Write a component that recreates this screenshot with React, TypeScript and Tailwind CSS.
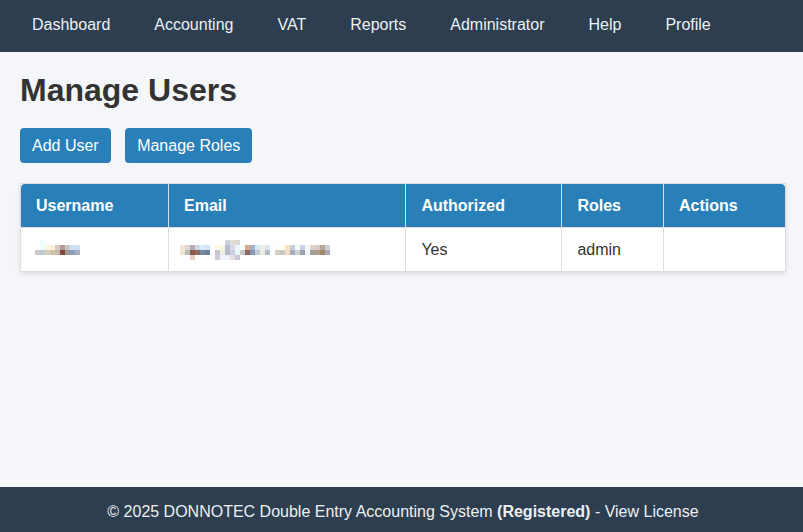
import React from 'react'

const navItems = ['Dashboard', 'Accounting', 'VAT', 'Reports', 'Administrator', 'Help', 'Profile']

// blurred-out values from the table, [x, y, colour] on a 5px grid
type Block = [number, number, string]

const row = (y: number, startX: number, colours: string[]): Block[] =>
  colours.map((c, i) => [startX + i * 5, y, c] as Block).filter((b) => b[2] !== '')

const usernameBlocks: Block[] = [
  ...row(0, 5, ['#f0fdff']),
  ...row(5, 5, ['#eefcff', '#fdf2e0', '#fdf0d8', '#d8c8c4', '#b89a94', '#c8c8c8', '#cfe0f0', '#cfe0f0']),
  ...row(10, 0, ['#c9c9c7', '#b9cdd2', '#d9cfb5', '#d0c4a8', '#c5b9b2', '#85483a', '#98989c', '#8aa0b8', '#a9aec2']),
]

const emailBlocks: Block[] = [
  ...row(0, 45, ['#ccd4dc', '#e0dcd8', '#dcd8d4']),
  ...row(5, 0, ['#f5e2d0', '#d8d8d8', '#b8aab4', '#d0d8e0', '#dceaf8', '#d0e2f5']),
  ...row(5, 35, ['#fbfbe8', '#f8f8e0', '#bcbccc', '#d8d8e8', '#eef8fc', '#f8fff8', '#d8a890', '#a8b0c8', '#d8e8f5', '#f0f0e8', '#d8e8f8']),
  ...row(5, 95, ['#fdfdf5', '#fdfdf0', '#f8e0c8', '#c8ccdc', '#f0f8f8', '#c8d0e4', '#f0fbff', '#e0d0cc', '#d8ccc0', '#b8a898', '#ccd0e0']),
  ...row(10, 0, ['#f5e2d0', '#b8bcb8', '#8e5a50', '#8e6a62', '#7888a0', '#6a8098']),
  ...row(10, 35, ['#c8c6d0', '#f0f0e0', '#b8b8c8', '#c8d0e4', '#e8f8f8', '#c8c8cc', '#906860', '#8898b8', '#c0ccd8', '#e8ecd8', '#b0bcc8']),
  ...row(10, 95, ['#d0d0c8', '#c8c8c0', '#f5dcc0', '#a8acc0', '#c8d4d0', '#a0a0b0', '#f0f8ff', '#a0a098', '#b09c88', '#a08868', '#b0a8b8']),
  ...row(15, 10, ['#e8d0c8']),
  ...row(15, 35, ['#d0ccd4', '#eef4fb', '#eef4fb', '#e8e0dc', '#c8c8d4']),
]

const Mosaic = ({ blocks, width }: { blocks: Block[]; width: number }) => (
  <svg width={width} height={20} className="block" shapeRendering="crispEdges">
    {blocks.map(([x, y, c], i) => (
      <rect key={i} x={x} y={y} width={5} height={5} fill={c} />
    ))}
  </svg>
)

const headers = [
  { label: 'Username', w: 'w-[148px]', pad: 'pl-[15px]' },
  { label: 'Email', w: 'w-[237px]', pad: 'pl-[15px]' },
  { label: 'Authorized', w: 'w-[156px]', pad: 'pl-[15.4px]' },
  { label: 'Roles', w: 'w-[102px]', pad: 'pl-[15.4px]' },
  { label: 'Actions', w: 'w-[121px]', pad: 'pl-[15px]' },
]

const App = () => {
  return (
    <div className="flex min-h-screen flex-col bg-[#f4f6f9] font-['Liberation_Sans',Arial,sans-serif] text-base text-[#333333]">
      <nav className="h-[52px] bg-[#2c3e50] pb-[2px] pl-[10px]">
        <ul className="flex h-full items-center">
          {navItems.map((item) => (
            <li key={item}>
              <a href="#" className="px-[22px] text-[#ecf0f1]">
                {item}
              </a>
            </li>
          ))}
        </ul>
      </nav>

      <main className="flex-1 p-5">
        <h1 className="mb-[19px] text-[32px] leading-[37px] font-bold text-[#333333]">Manage Users</h1>
        <div className="mb-5 flex gap-[14.45px]">
          <button className="h-[35px] rounded bg-[#2980b9] px-3 text-white">Add User</button>
          <button className="h-[35px] rounded bg-[#2980b9] px-3 text-white">Manage Roles</button>
        </div>

        <div className="w-[766px] border border-[#dddddd] bg-white shadow-[0_2px_5px_rgba(0,0,0,0.1)]">
          <table className="w-full table-fixed border-separate border-spacing-0">
            <thead>
              <tr className="h-[44px] text-white">
                {headers.map((h) => (
                  <th key={h.label} className={`${h.w} ${h.pad} border-r border-b border-[#dddddd] bg-[#2980b9] text-left font-bold first:rounded-tl last:rounded-tr last:border-r-0`}>
                    {h.label}
                  </th>
                ))}
              </tr>
            </thead>
            <tbody>
              <tr className="h-[43px]">
                <td className="border-r border-[#dddddd] px-[14px]">
                  <Mosaic blocks={usernameBlocks} width={45} />
                </td>
                <td className="border-r border-[#dddddd] px-[11px]">
                  <Mosaic blocks={emailBlocks} width={150} />
                </td>
                <td className="border-r border-[#dddddd] pl-[15.4px]">Yes</td>
                <td className="border-r border-[#dddddd] pl-[15.4px]">admin</td>
                <td className="px-[15px]"></td>
              </tr>
            </tbody>
          </table>
        </div>
      </main>

      <footer className="flex h-[45px] items-center justify-center bg-[#2c3e50] pt-[4px] pl-[3px] text-[#ecf0f1]">
        <p>
          © 2025 DONNOTEC Double Entry Accounting System <strong>(Registered)</strong> - View License
        </p>
      </footer>
    </div>
  )
}

export default App
